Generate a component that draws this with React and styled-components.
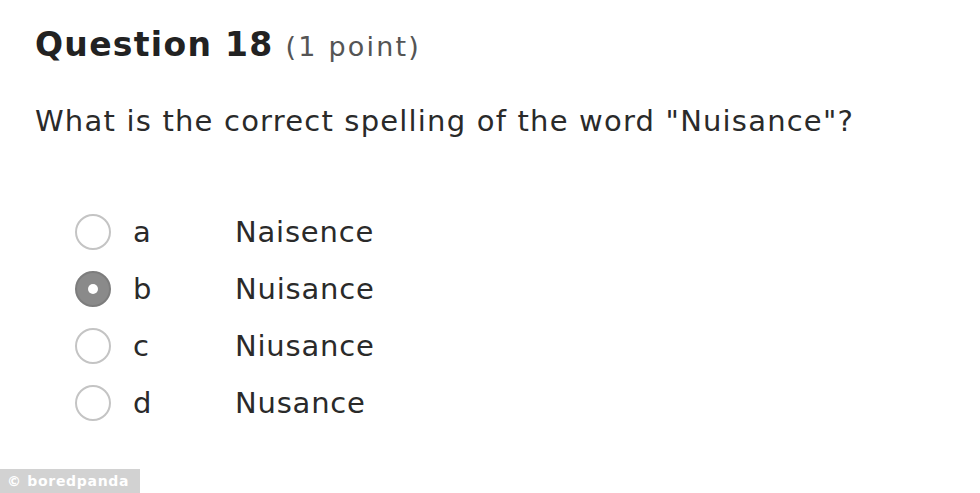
import React from 'react'
import styled, { createGlobalStyle } from 'styled-components'

const GlobalStyle = createGlobalStyle`
  html, body {
    margin: 0;
    padding: 0;
    background: #ffffff;
  }
  body {
    font-family: "DejaVu Sans", Verdana, sans-serif;
    color: #2a2a2a;
  }
`

const Page = styled.div`
  position: relative;
  width: 980px;
  height: 493px;
  overflow: hidden;
  background: #ffffff;
  padding: 23px 0 0 35px;
  box-sizing: border-box;
`

const Title = styled.h2`
  margin: 0;
  font-size: 33px;
  font-weight: bold;
  letter-spacing: 1.3px;
  color: #222;
  line-height: 44px;
`

const Points = styled.span`
  font-size: 27px;
  font-weight: normal;
  letter-spacing: 2.2px;
  color: #555;
  margin-left: 12px;
`

const Prompt = styled.p`
  margin: 32px 0 0;
  font-size: 29px;
  letter-spacing: 1.2px;
  line-height: 40px;
  color: #2a2a2a;
`

const Options = styled.ul`
  list-style: none;
  margin: 73px 0 0 40px;
  padding: 0;
  display: flex;
  flex-direction: column;
  gap: 21px;
`

const Option = styled.li`
  display: flex;
  align-items: center;
  height: 36px;
  font-size: 29px;
  letter-spacing: 0.8px;
`

const Radio = styled.span`
  width: 36px;
  height: 36px;
  box-sizing: border-box;
  border-radius: 50%;
  border: 2px solid ${p => (p.checked ? '#7d7d7d' : '#c4c4c4')};
  background: ${p => (p.checked ? '#8a8a8a' : '#fff')};
  display: flex;
  align-items: center;
  justify-content: center;
  flex-shrink: 0;

  &::after {
    content: '';
    display: ${p => (p.checked ? 'block' : 'none')};
    width: 10px;
    height: 10px;
    border-radius: 50%;
    background: #fff;
  }
`

const Letter = styled.span`
  width: 124px;
  padding-left: 22px;
  box-sizing: border-box;
  flex-shrink: 0;
`

const Answer = styled.span``

const Watermark = styled.div`
  position: absolute;
  left: 0;
  bottom: 0;
  width: 140px;
  height: 24px;
  background: #d2d2d2;
  color: #fff;
  font-family: "DejaVu Sans", Verdana, sans-serif;
  font-weight: bold;
  font-size: 14px;
  letter-spacing: 0.7px;
  line-height: 24px;
  padding-left: 7px;
  box-sizing: border-box;
  white-space: nowrap;
`

const options = [
  { key: 'a', text: 'Naisence' },
  { key: 'b', text: 'Nuisance', checked: true },
  { key: 'c', text: 'Niusance' },
  { key: 'd', text: 'Nusance' },
]

const App = () => (
  <Page>
    <GlobalStyle />
    <Title>
      Question 18<Points>(1 point)</Points>
    </Title>
    <Prompt>What is the correct spelling of the word "Nuisance"?</Prompt>
    <Options>
      {options.map(o => (
        <Option key={o.key}>
          <Radio checked={o.checked} />
          <Letter>{o.key}</Letter>
          <Answer>{o.text}</Answer>
        </Option>
      ))}
    </Options>
    <Watermark>© boredpanda</Watermark>
  </Page>
)

export default App
